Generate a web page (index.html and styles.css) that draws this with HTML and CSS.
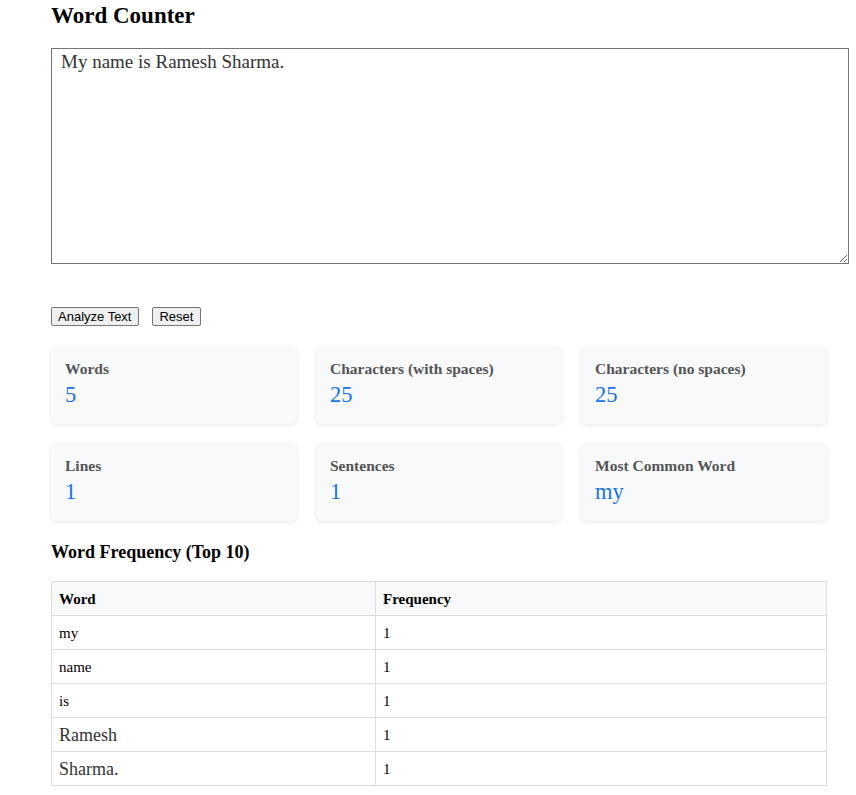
FILE: index.html
```html
<!DOCTYPE html>
<html>
<head>
<meta charset="utf-8">
<title>Word Counter</title>
<link rel="stylesheet" href="styles.css">
</head>
<body>
<div class="container">
  <h1 class="title">Word Counter</h1>
  <textarea class="input">My name is Ramesh Sharma.</textarea>
  <div class="actions">
    <button class="btn">Analyze Text</button>
    <button class="btn">Reset</button>
  </div>
  <div class="stats">
    <div class="card"><div class="label">Words</div><div class="value">5</div></div>
    <div class="card"><div class="label">Characters (with spaces)</div><div class="value">25</div></div>
    <div class="card"><div class="label">Characters (no spaces)</div><div class="value">25</div></div>
    <div class="card"><div class="label">Lines</div><div class="value">1</div></div>
    <div class="card"><div class="label">Sentences</div><div class="value">1</div></div>
    <div class="card"><div class="label">Most Common Word</div><div class="value">my</div></div>
  </div>
  <h3 class="subtitle">Word Frequency (Top 10)</h3>
  <table class="freq">
    <thead>
      <tr><th class="col-word">Word</th><th>Frequency</th></tr>
    </thead>
    <tbody>
      <tr><td>my</td><td>1</td></tr>
      <tr><td>name</td><td>1</td></tr>
      <tr><td>is</td><td>1</td></tr>
      <tr><td class="big">Ramesh</td><td>1</td></tr>
      <tr><td class="big">Sharma.</td><td>1</td></tr>
    </tbody>
  </table>
</div>
</body>
</html>
```
FILE: styles.css
```css
html, body {
  margin: 0;
  padding: 0;
  background: #fff;
}
body {
  font-family: "Liberation Serif", "Times New Roman", serif;
  color: #000;
}
.container {
  margin-left: 51px;
  width: 776px;
  padding-top: 4px;
}
.title {
  font-size: 23px;
  font-weight: bold;
  margin: 0;
  line-height: 24px;
}
.input {
  display: block;
  margin-top: 20px;
  width: 776px;
  height: 210px;
  padding: 2px 11px 2px 9px;
  border: 1px solid #767676;
  font-family: "Liberation Serif", "Times New Roman", serif;
  font-size: 19px;
  color: #333;
  resize: vertical;
  box-sizing: content-box;
}
.actions {
  margin-top: 43px;
  display: flex;
  gap: 13px;
  height: 19px;
}
.btn {
  font-family: "Liberation Sans", Arial, sans-serif;
  font-size: 13px;
  padding: 1px 7px 1px 6px;
  height: 19px;
  line-height: 15px;
  border: 1px solid #767676;
  border-radius: 2px;
  background: #efefef;
  color: #000;
}
.stats {
  margin-top: 21px;
  display: grid;
  grid-template-columns: repeat(3, 246px);
  column-gap: 19px;
  row-gap: 20px;
}
.card {
  background: #f8f9fa;
  border-radius: 6px;
  box-shadow: 0 1px 4px rgba(0,0,0,0.1);
  padding: 13px 14px 14px;
  height: 50px;
}
.label {
  font-size: 15.5px;
  font-weight: bold;
  color: #555;
  line-height: 18px;
  margin-bottom: 4px;
}
.value {
  font-size: 22.5px;
  color: #1a73e8;
  line-height: 26px;
}
.subtitle {
  font-size: 18px;
  font-weight: bold;
  margin: 21px 0 0;
  line-height: 20px;
}
.freq {
  margin-top: 19px;
  width: 776px;
  border-collapse: collapse;
}
.freq th, .freq td {
  border: 1px solid #ddd;
  padding: 0 7px;
  height: 33px;
  text-align: left;
  font-size: 15px;
  line-height: 16px;
  color: #000;
}
.freq th {
  background: #f8f9fa;
  font-size: 15px;
  font-weight: bold;
  color: #000;
}
.freq .col-word {
  width: 309px;
}
.freq td.big {
  font-size: 18px;
  color: #333;
}
```
